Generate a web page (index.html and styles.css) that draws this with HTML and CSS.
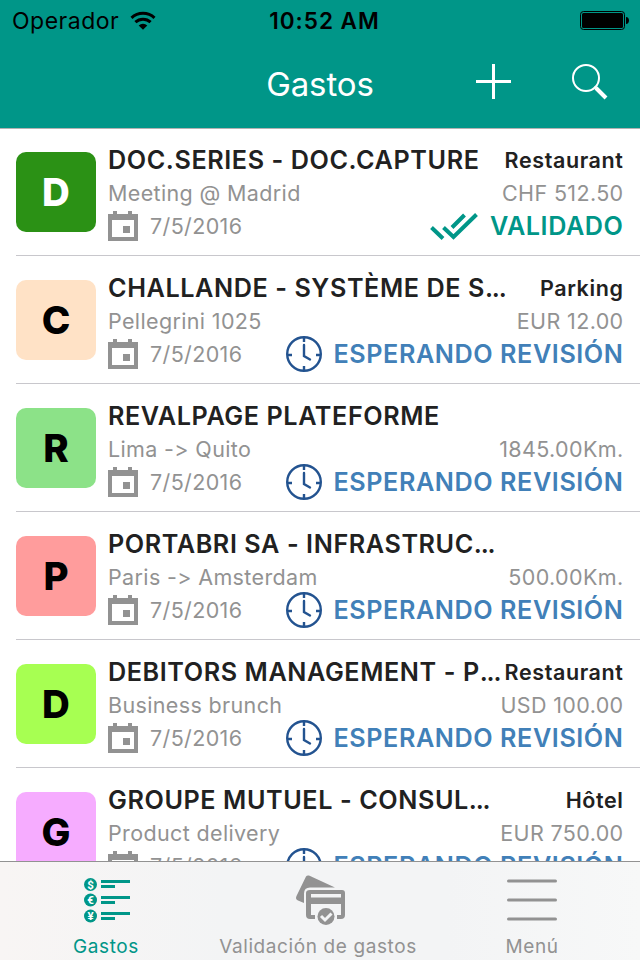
FILE: index.html
```html
<!DOCTYPE html>
<html lang="es">
<head>
    <meta charset="UTF-8">
    <meta name="viewport" content="width=device-width, initial-scale=1.0">
    <title>Gastos</title>
    <link rel="stylesheet" href="styles.css">
</head>
<body>
    <!-- shared icons -->
    <svg class="icons" width="0" height="0">
        <symbol id="calendar" viewBox="0 0 30 30">
            <path fill="#929292" fill-rule="evenodd" d="M0 3h5V0h4v3h11V0h4v3h6v27H0zM4 9v17h22V9zM15 15h7v7h-7z"/>
        </symbol>
        <symbol id="clock" viewBox="0 0 36 36">
            <g fill="none" stroke="#235390" stroke-width="2.400">
                <circle cx="18" cy="18" r="16.800"/>
                <path d="M18 1v5M18 30v5M1 19h5M30 19h5"/>
                <path d="M18 9v11l6 3.500" stroke-linecap="round"/>
            </g>
        </symbol>
        <symbol id="checks" viewBox="0 0 48 28">
            <path fill="none" stroke="#009688" stroke-width="4" d="M1.500 15.500l11.500 11M13.500 15.500l10 9.500L46.500 2.500M22 15.500L34.500 3"/>
        </symbol>
    </svg>

    <div class="phone">
        <header class="header">
            <div class="status-bar">
                <div class="carrier">
                    <span>Operador</span>
                    <svg width="26" height="20" viewBox="0 0 26 20">
                        <g fill="none" stroke="#000" stroke-width="3">
                            <path d="M1.500 6.800a17 17 0 0 1 23 0"/>
                            <path d="M5.400 11.200a11 11 0 0 1 15.200 0"/>
                        </g>
                        <path d="M8.700 14.500a6.200 6.200 0 0 1 8.600 0L13 18.800z"/>
                    </svg>
                </div>
                <span class="time">10:52 AM</span>
                <svg class="battery" width="49" height="19" viewBox="0 0 49 19">
                    <rect x=".5" y=".5" width="44" height="18" rx="3" fill="none" stroke="#000"/>
                    <rect x="2" y="2" width="41" height="15" rx="1.500"/>
                    <path d="M46 6c4 0 4 7 0 7z"/>
                </svg>
            </div>
            <div class="nav-bar">
                <h1>Gastos</h1>
                <div class="actions">
                    <svg width="35" height="35" viewBox="0 0 35 35">
                        <path fill="#fff" d="M16 0h3v16h16v3H19v16h-3V19H0v-3h16z"/>
                    </svg>
                    <svg width="36" height="36" viewBox="0 0 36 36">
                        <circle cx="14" cy="14" r="13" fill="none" stroke="#fff" stroke-width="2"/>
                        <path d="M22.500 22.500l2 2" stroke="#fff" stroke-width="2"/>
                        <path d="M24 24l10 10" stroke="#fff" stroke-width="4"/>
                    </svg>
                </div>
            </div>
        </header>

        <main class="list">
            <div class="expense">
                <div class="avatar green">D</div>
                <div class="info">
                    <div class="line"><span class="title">DOC.SERIES - DOC.CAPTURE</span><span class="category">Restaurant</span></div>
                    <div class="line detail"><span>Meeting @ Madrid</span><span>CHF 512.50</span></div>
                    <div class="line">
                        <span class="date"><svg width="30" height="30"><use href="#calendar"/></svg>7/5/2016</span>
                        <span class="status valid"><svg width="48" height="28"><use href="#checks"/></svg>VALIDADO</span>
                    </div>
                </div>
            </div>
            <div class="expense">
                <div class="avatar peach">C</div>
                <div class="info">
                    <div class="line"><span class="title">CHALLANDE - SYSTÈME DE S<span class="dots">...</span></span><span class="category">Parking</span></div>
                    <div class="line detail"><span>Pellegrini 1025</span><span>EUR 12.00</span></div>
                    <div class="line">
                        <span class="date"><svg width="30" height="30"><use href="#calendar"/></svg>7/5/2016</span>
                        <span class="status"><svg width="36" height="36"><use href="#clock"/></svg>ESPERANDO REVISIÓN</span>
                    </div>
                </div>
            </div>
            <div class="expense">
                <div class="avatar mint">R</div>
                <div class="info">
                    <div class="line"><span class="title">REVALPAGE PLATEFORME</span></div>
                    <div class="line detail"><span>Lima -&gt; Quito</span><span>1845.00Km.</span></div>
                    <div class="line">
                        <span class="date"><svg width="30" height="30"><use href="#calendar"/></svg>7/5/2016</span>
                        <span class="status"><svg width="36" height="36"><use href="#clock"/></svg>ESPERANDO REVISIÓN</span>
                    </div>
                </div>
            </div>
            <div class="expense">
                <div class="avatar salmon">P</div>
                <div class="info">
                    <div class="line"><span class="title">PORTABRI SA - INFRASTRUC<span class="dots">...</span></span></div>
                    <div class="line detail"><span>Paris -&gt; Amsterdam</span><span>500.00Km.</span></div>
                    <div class="line">
                        <span class="date"><svg width="30" height="30"><use href="#calendar"/></svg>7/5/2016</span>
                        <span class="status"><svg width="36" height="36"><use href="#clock"/></svg>ESPERANDO REVISIÓN</span>
                    </div>
                </div>
            </div>
            <div class="expense">
                <div class="avatar lime">D</div>
                <div class="info">
                    <div class="line"><span class="title">DEBITORS MANAGEMENT - P<span class="dots">...</span></span><span class="category">Restaurant</span></div>
                    <div class="line detail"><span>Business brunch</span><span>USD 100.00</span></div>
                    <div class="line">
                        <span class="date"><svg width="30" height="30"><use href="#calendar"/></svg>7/5/2016</span>
                        <span class="status"><svg width="36" height="36"><use href="#clock"/></svg>ESPERANDO REVISIÓN</span>
                    </div>
                </div>
            </div>
            <div class="expense">
                <div class="avatar pink">G</div>
                <div class="info">
                    <div class="line"><span class="title">GROUPE MUTUEL - CONSUL<span class="dots">...</span></span><span class="category">Hôtel</span></div>
                    <div class="line detail"><span>Product delivery</span><span>EUR 750.00</span></div>
                    <div class="line">
                        <span class="date"><svg width="30" height="30"><use href="#calendar"/></svg>7/5/2016</span>
                        <span class="status"><svg width="36" height="36"><use href="#clock"/></svg>ESPERANDO REVISIÓN</span>
                    </div>
                </div>
            </div>
        </main>

        <nav class="tab-bar">
            <a class="tab active">
                <svg width="48" height="52" viewBox="0 0 48 52">
                    <g fill="#009688">
                        <circle cx="7.500" cy="9.500" r="6.500"/>
                        <circle cx="7.500" cy="25" r="6.500"/>
                        <circle cx="7.500" cy="41" r="6.500"/>
                        <path d="M18 5h29v3H18zM18 10h14v3H18zM18 21h29v3H18zM18 26h14v3H18zM18 37h29v3H18zM18 42h14v3H18z"/>
                    </g>
                    <g class="coin">
                        <text x="7.500" y="13.500">$</text>
                        <text x="7.500" y="29">€</text>
                        <text x="7.500" y="45">¥</text>
                    </g>
                </svg>
                <span>Gastos</span>
            </a>
            <a class="tab cards">
                <svg width="52" height="52" viewBox="0 0 52 52">
                    <g fill="#929292">
                        <path d="M11 1.500Q12 0 14 .5L40 12.500H15q-6 0-6 6v9.500l-6-2.500Q0 24 1.500 21z"/>
                        <path fill-rule="evenodd" d="M15 15h32q3 0 3 3v22q0 4-4 4h-4v-4h4V29H16v11h4v4h-5q-4 0-4-4V18q0-3 4-3zm1 4v3.500h30V19z"/>
                        <circle cx="31" cy="41.500" r="8.500"/>
                    </g>
                    <path d="M26 41l4 4 6.500-6.500" fill="none" stroke="#f3f4f5" stroke-width="3"/>
                </svg>
                <span>Validación de gastos</span>
            </a>
            <a class="tab menu">
                <svg width="50" height="52" viewBox="0 0 50 52">
                    <path d="M1.500 6h47M1.500 25h47M1.500 44h47" stroke="#929292" stroke-width="3" stroke-linecap="round"/>
                </svg>
                <span>Menú</span>
            </a>
        </nav>
    </div>
</body>
</html>
```
FILE: styles.css
```css
body {
    margin: 0;
    font-family: Inter, "Liberation Sans", sans-serif;
    font-feature-settings: "calt" 0;
    background: #fff;
}
.icons {
    display: block;
}
.phone {
    width: 640px;
    height: 960px;
    display: flex;
    flex-direction: column;
    overflow: hidden;
}
.header {
    height: 128px;
    flex: none;
    background: #009688;
    border-bottom: 1px solid #b2b2b2;
    margin-bottom: -1px;
}
.status-bar {
    height: 40px;
    display: grid;
    grid-template-columns: 1fr auto 1fr;
    align-items: center;
    padding: 0 11px 0 12px;
    font-size: 23px;
    line-height: 40px;
}
.status-bar span {
    padding-top: 1px;
}
.carrier {
    display: flex;
    align-items: center;
    gap: 11px;
    letter-spacing: 0.5px;
}
.time {
    margin-left: 8px;
    font-weight: 600;
    font-size: 22.5px;
    letter-spacing: 1px;
}
.battery {
    justify-self: end;
}
.nav-bar {
    height: 88px;
    display: grid;
    grid-template-columns: 1fr auto 1fr;
    align-items: center;
    padding: 0 32px;
}
.nav-bar h1 {
    grid-column: 2;
    margin: 0;
    color: #fff;
    font-size: 33px;
    font-weight: 400;
    letter-spacing: -0.1px;
}
.actions {
    display: flex;
    align-items: center;
    justify-content: flex-end;
    gap: 61px;
    padding-bottom: 5px;
}
.list {
    flex: 1;
    min-height: 0;
    overflow: hidden;
}
.expense {
    box-sizing: border-box;
    height: 128px;
    margin-left: 16px;
    padding: 15px 16.5px 0 0;
    display: flex;
    gap: 12px;
    border-bottom: 1px solid #c8c7cc;
}
.avatar {
    width: 80px;
    height: 80px;
    flex: none;
    margin-top: 9px;
    border-radius: 10px;
    font-size: 38.5px;
    font-weight: 800;
    line-height: 80px;
    text-align: center;
}
.green { background: #2b9115; color: #fff; }
.peach { background: #ffe2c6; }
.mint { background: #8ce288; }
.salmon { background: #ff9c9c; }
.lime { background: #a7ff52; }
.pink { background: #f6acff; }
.info {
    flex: 1;
    min-width: 0;
}
.line {
    height: 33px;
    display: flex;
    justify-content: space-between;
    align-items: center;
    white-space: nowrap;
}
.title {
    color: #212121;
    font-size: 25.2px;
    font-weight: 600;
    letter-spacing: 0.58px;
}
.dots {
    letter-spacing: -1.2px;
}
.category {
    color: #212121;
    font-size: 21.5px;
    font-weight: 600;
    letter-spacing: 0.6px;
}
.detail, .date {
    color: #929292;
    font-size: 21.5px;
    letter-spacing: 0.36px;
}
.date {
    display: flex;
    align-items: center;
    gap: 12px;
}
.status {
    display: flex;
    align-items: center;
    gap: 12px;
    color: #4180b8;
    font-size: 25.2px;
    font-weight: 600;
    letter-spacing: 0.57px;
}
.valid {
    color: #009688;
}
.tab-bar {
    box-sizing: border-box;
    height: 99px;
    flex: none;
    display: flex;
    border-top: 1px solid #929292;
    background: linear-gradient(to right, #f8f5f4, #f3f4f5 35%, #f3f4f5 70%, #f7f8f8);
}
.tab {
    flex: 1;
    display: flex;
    flex-direction: column;
    align-items: center;
    padding-top: 13px;
    color: #929292;
    font-size: 19px;
    letter-spacing: 0.6px;
}
.tab span {
    margin-top: 8px;
}
.active {
    color: #009688;
}
.active svg {
    margin-left: 2px;
}
.cards {
    padding-right: 2px;
}
.cards svg {
    margin-left: 5px;
}
.menu {
    padding-right: 2px;
}
.coin {
    fill: #fff;
    font-family: Roboto, sans-serif;
    font-size: 11.5px;
    font-weight: 700;
    letter-spacing: 0;
    text-anchor: middle;
}
```
